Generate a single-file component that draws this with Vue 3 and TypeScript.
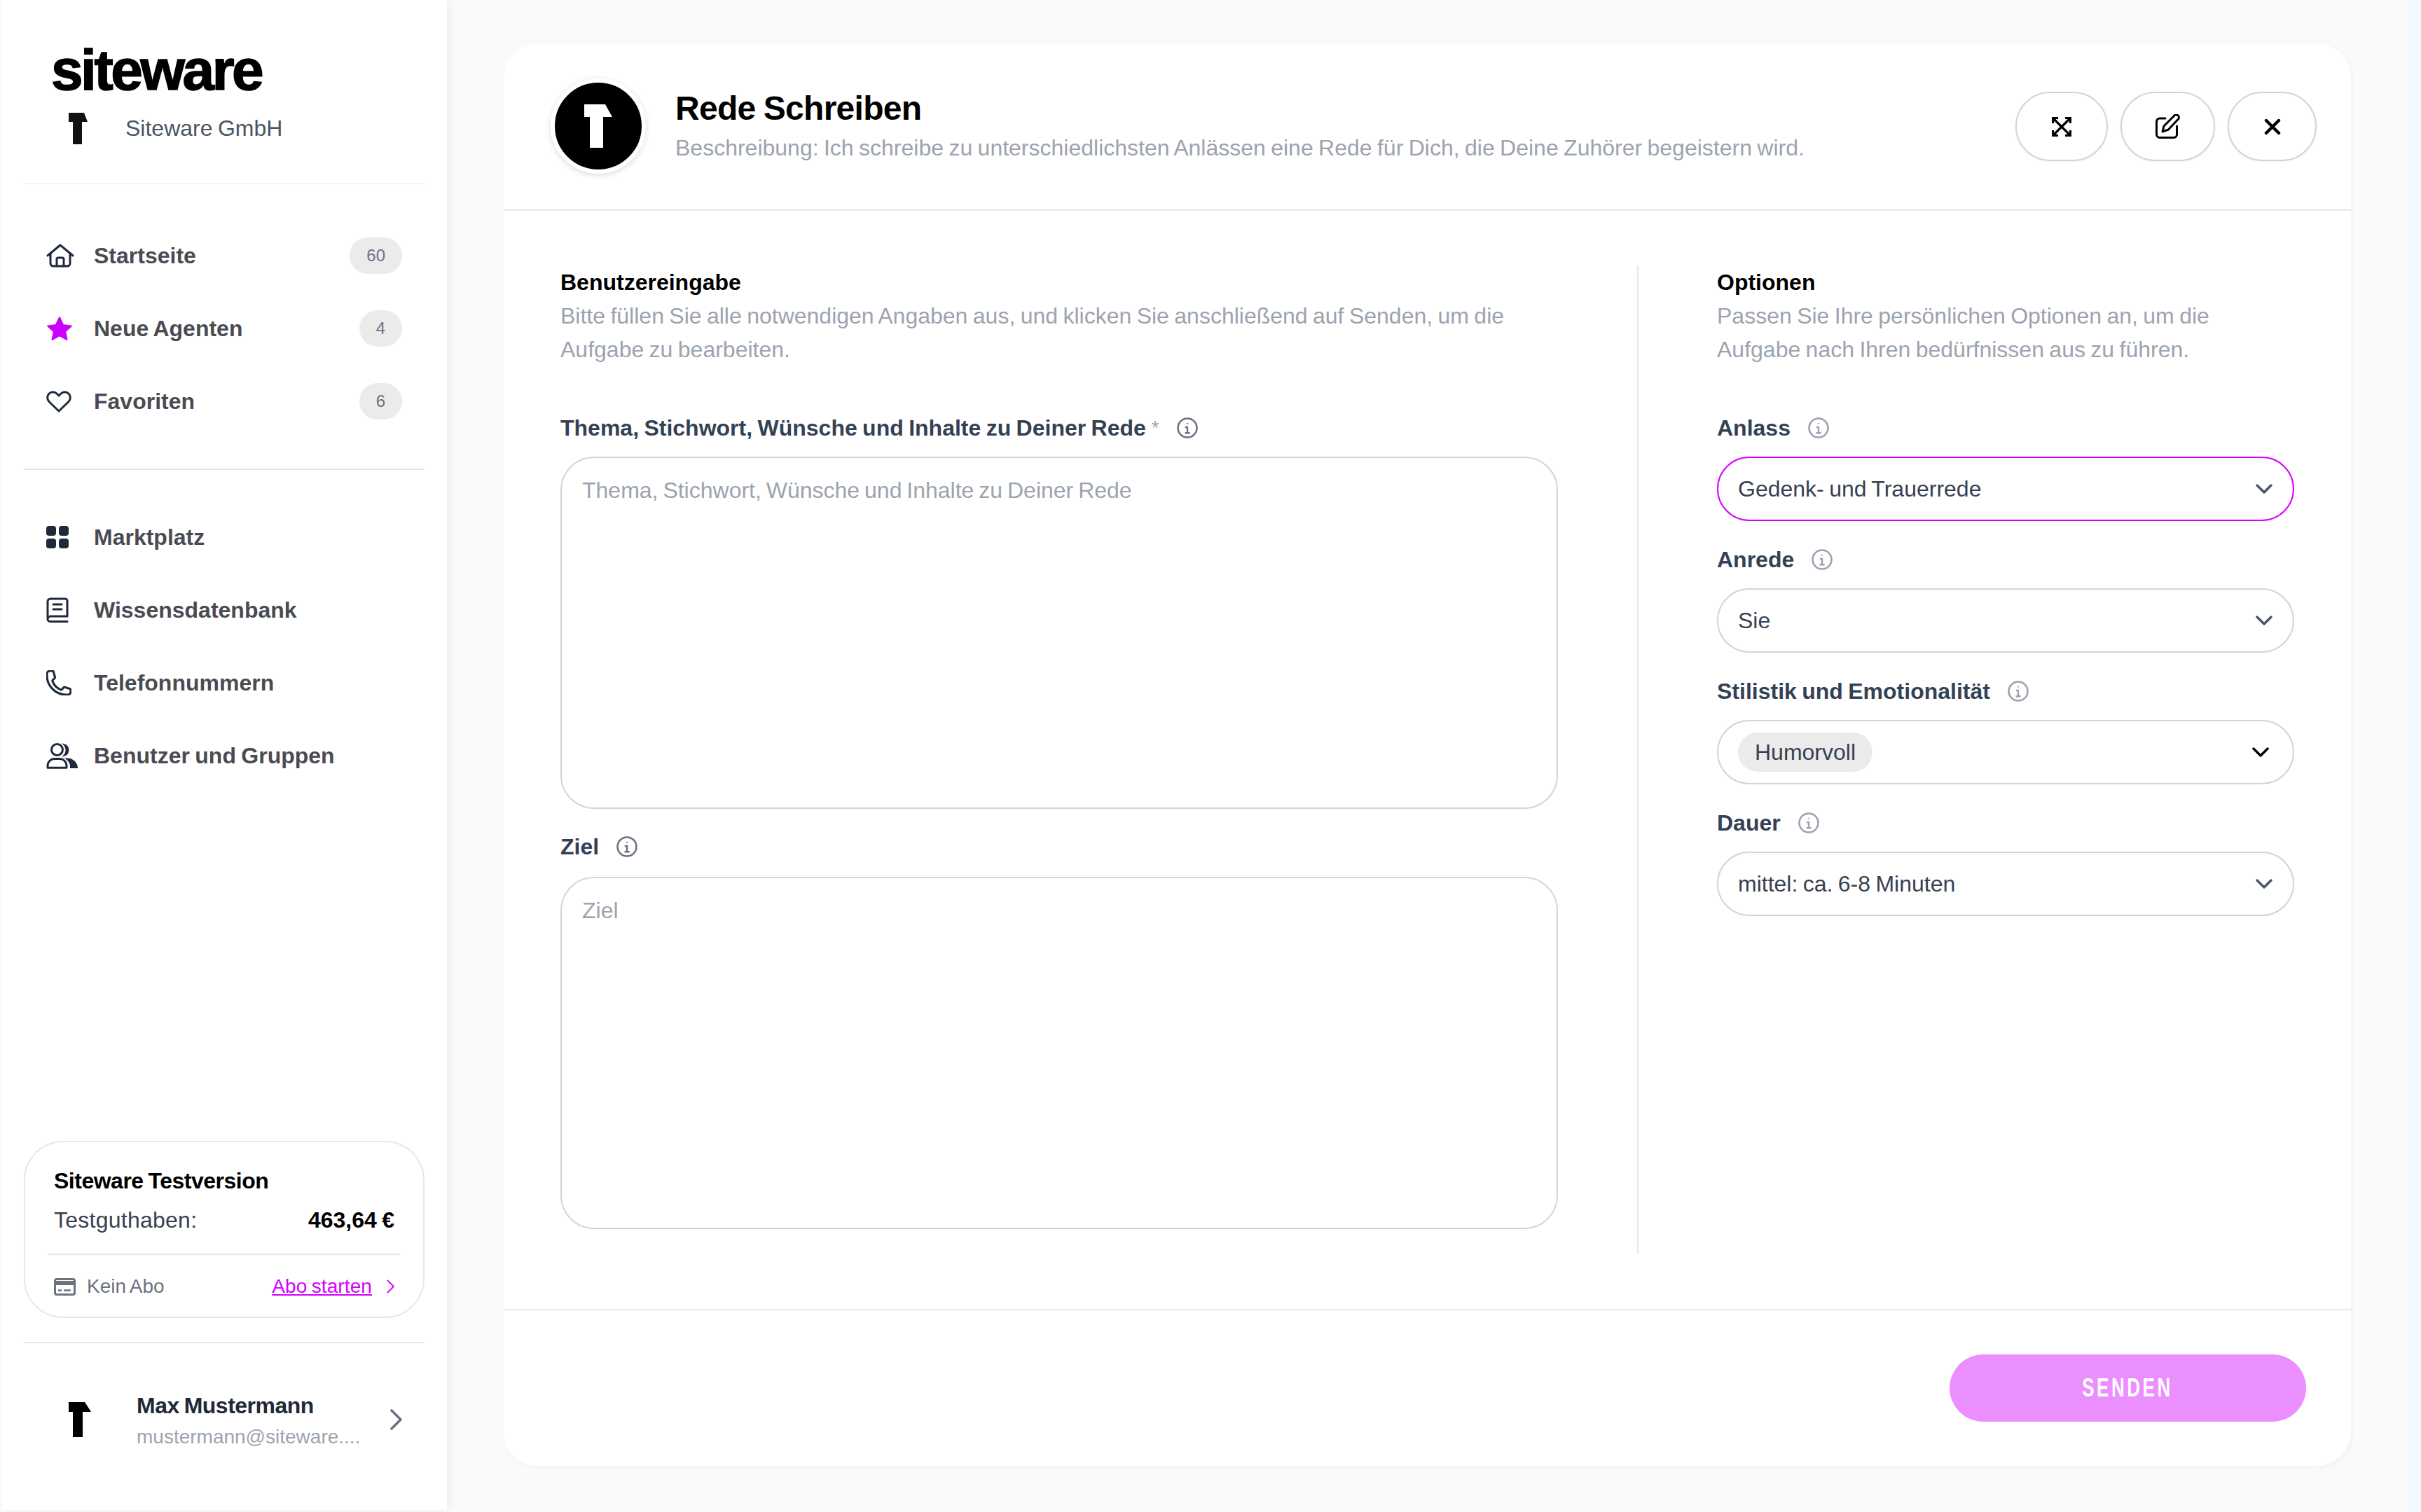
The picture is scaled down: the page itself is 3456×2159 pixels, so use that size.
<script setup lang="ts">
interface Field { label: string; value: string; focus?: boolean; chip?: boolean }
const fields: Field[] = [
  { label: 'Anlass', value: 'Gedenk- und Trauerrede', focus: true },
  { label: 'Anrede', value: 'Sie' },
  { label: 'Stilistik und Emotionalität', value: 'Humorvoll', chip: true },
  { label: 'Dauer', value: 'mittel: ca. 6-8 Minuten' },
]
</script>

<template>
  <svg class="defs" aria-hidden="true">
    <symbol id="info" viewBox="0 0 32 32">
      <circle cx="16" cy="16" r="13.5" fill="none" stroke="currentColor" stroke-width="2.6" />
      <path d="M16 9v1.6M12.8 15H16v8.2M12.6 23.2h7" fill="none" stroke="currentColor" stroke-width="2.4" />
    </symbol>
    <symbol id="chev" viewBox="0 0 24 14">
      <path d="M2 2l10 10L22 2" fill="none" stroke="currentColor" stroke-width="3.4" stroke-linecap="round" stroke-linejoin="round" />
    </symbol>
  </svg>
  <div class="page">
    <aside class="sidebar">
      <div class="brand">
        <div class="logo">siteware</div>
        <div class="org">
          <svg class="org-mark" viewBox="0 0 27 45"><path d="M0 0H22L27 13H19V45H6V13H0Z" fill="#111" /></svg>
          <span>Siteware GmbH</span>
        </div>
      </div>
      <nav class="nav first">
        <a class="row">
          <svg class="ic" viewBox="0 0 40 34" width="40" height="34"><g fill="none" stroke="#1e293b" stroke-width="3" stroke-linecap="round" stroke-linejoin="round"><path d="M2 17L20 2l18 15" /><path d="M6 13.5V28a4 4 0 0 0 4 4h20a4 4 0 0 0 4-4V13.5" /><path d="M15 32V22a2 2 0 0 1 2-2h6a2 2 0 0 1 2 2v10" /></g></svg>
          <span class="name">Startseite</span><span class="badge">60</span>
        </a>
        <a class="row">
          <svg class="ic" viewBox="0 0 38 36" width="38" height="36"><path d="M19 2.5l5 10.8 11.5 1.3-8.6 7.8 2.4 11.4L19 28l-10.300 5.800 2.400-11.400-8.600-7.800 11.500-1.300z" fill="#cc00ff" stroke="#cc00ff" stroke-width="2.4" stroke-linejoin="round" /></svg>
          <span class="name">Neue Agenten</span><span class="badge">4</span>
        </a>
        <a class="row">
          <svg class="ic" viewBox="0 0 36 31" width="36" height="31"><path d="M18 29L4 15.500a8.300 8.300 0 0 1 0-11.500c3.200-3 8-3 11 0l3 3 3-3c3-3 7.800-3 11 0a8.300 8.300 0 0 1 0 11.500z" fill="none" stroke="#1e293b" stroke-width="3" stroke-linejoin="round" /></svg>
          <span class="name">Favoriten</span><span class="badge">6</span>
        </a>
      </nav>
      <nav class="nav">
        <a class="row">
          <svg class="ic" viewBox="0 0 32 32" width="32" height="32"><g fill="#1e293b"><rect width="14" height="14" rx="4" /><rect x="18" width="14" height="14" rx="4" /><rect y="18" width="14" height="14" rx="4" /><rect x="18" y="18" width="14" height="14" rx="4" /></g></svg>
          <span class="name">Marktplatz</span>
        </a>
        <a class="row">
          <svg class="ic" viewBox="0 0 32 36" width="32" height="36"><g fill="none" stroke="#1e293b" stroke-width="3" stroke-linecap="round" stroke-linejoin="round"><path d="M2 30V6a4 4 0 0 1 4-4h21a3 3 0 0 1 3 3v22H6a4 4 0 0 0-4 4 3.500 3.500 0 0 0 3.500 3.500H30" /><path d="M10 10h12M10 17h12" /></g></svg>
          <span class="name">Wissensdatenbank</span>
        </a>
        <a class="row">
          <svg class="ic" viewBox="2 2 20 20" width="36" height="36"><path d="M2.600 6.500c0 8 6.900 14.900 14.900 14.900h1.700a2.200 2.200 0 0 0 2.200-2.200v-1.400c0-.5-.3-.9-.8-1.100l-3.800-1.200c-.5-.1-.9 0-1.200.4l-.9 1.200c-.3.400-.8.500-1.200.400a12 12 0 0 1-6.500-6.700c-.2-.4 0-.9.300-1.200l1.200-1c.4-.3.500-.7.400-1.200L7.800 3.400a1.100 1.100 0 0 0-1-.9H5a2.400 2.400 0 0 0-2.400 2.400z" fill="none" stroke="#1e293b" stroke-width="1.700" stroke-linejoin="round" /></svg>
          <span class="name">Telefonnummern</span>
        </a>
        <a class="row">
          <svg class="ic" viewBox="0 0 46 37" width="46" height="37"><g fill="#1e293b"><path d="M25.500 2.300a8 8 0 0 1 0 15.400 11 11 0 0 0 0-15.400z" stroke="#1e293b" stroke-width="2" /><path d="M25.500 21.500h4.500A15 15 0 0 1 45 35v1H34v-3c0-4.500-3.500-9-8.500-11.500z" /></g><g fill="none" stroke="#1e293b" stroke-width="3" stroke-linejoin="round"><circle cx="15.500" cy="9.500" r="8" /><path d="M2 35.300V32a10 10 0 0 1 10-9.500h7A10 10 0 0 1 29 32v3.300z" /></g></svg>
          <span class="name">Benutzer und Gruppen</span>
        </a>
      </nav>
      <div class="spacer"></div>
      <section class="plan">
        <div class="plan-title">Siteware Testversion</div>
        <div class="plan-credit"><span>Testguthaben:</span><b>463,64 €</b></div>
        <div class="plan-foot">
          <svg viewBox="0 0 31 25" width="31" height="25"><rect x="1.500" y="1.500" width="28" height="22" rx="2.500" fill="none" stroke="#6b7280" stroke-width="3" /><path d="M2 4h27v6H2z" fill="#6b7280" /><path d="M6 17.500h5M14 17.500h10" stroke="#6b7280" stroke-width="2.500" /></svg>
          <span class="no-plan">Kein Abo</span>
          <a class="start">Abo starten</a>
          <svg class="start-chev" viewBox="0 0 11 20" width="11" height="20"><path d="M1 1l9 9-9 9" fill="none" stroke="#cc00ff" stroke-width="1.800" /></svg>
        </div>
      </section>
      <footer class="user">
        <svg class="user-mark" viewBox="0 0 32 50"><path d="M0 0H23L32 14H20V50H6V14H0Z" fill="#000" /></svg>
        <div class="user-text">
          <div class="user-name">Max Mustermann</div>
          <div class="user-mail">mustermann@siteware....</div>
        </div>
        <svg viewBox="0 0 17 30" width="17" height="30"><path d="M2 2l13 13L2 28" fill="none" stroke="#6b7280" stroke-width="3.600" stroke-linecap="round" stroke-linejoin="round" /></svg>
      </footer>
    </aside>

    <main class="main">
      <article class="card">
        <header class="head">
          <div class="avatar">
            <svg viewBox="0 0 40 62" width="40" height="62"><path d="M0 0H30L40 18H27V62H8V18H0Z" fill="#fff" /></svg>
          </div>
          <div class="head-text">
            <h1>Rede Schreiben</h1>
            <p>Beschreibung: Ich schreibe zu unterschiedlichsten Anlässen eine Rede für Dich, die Deine Zuhörer begeistern wird.</p>
          </div>
          <div class="actions">
            <button class="act w1"><svg viewBox="0 0 28 28" width="28" height="28"><path d="M1.500 1.500l25 25M26.500 1.500l-25 25M1.500 9V1.500H9M19 1.500h7.500V9M1.500 19v7.500H9M26.500 19v7.500H19" fill="none" stroke="#000" stroke-width="3.200" /></svg></button>
            <button class="act w2"><svg viewBox="0 0 36 35" width="36" height="35"><g fill="none" stroke="#000" stroke-width="3" stroke-linecap="round" stroke-linejoin="round"><path d="M14 6H6a4.500 4.500 0 0 0-4.500 4.500V29A4.500 4.500 0 0 0 6 33.500h20a4.500 4.500 0 0 0 4.500-4.500V17" /><path d="M10 25l2-8L26 3a3.600 3.600 0 0 1 7 3.500L18.500 22z" /></g></svg></button>
            <button class="act w3"><svg viewBox="0 0 24 24" width="24" height="24"><path d="M3 3l18 18M21 3L3 21" fill="none" stroke="#000" stroke-width="4.400" stroke-linecap="round" /></svg></button>
          </div>
        </header>

        <div class="body">
          <section class="col-left">
            <h2>Benutzereingabe</h2>
            <p class="desc">Bitte füllen Sie alle notwendigen Angaben aus, und klicken Sie anschließend auf Senden, um die Aufgabe zu bearbeiten.</p>
            <label class="lab first-lab">Thema, Stichwort, Wünsche und Inhalte zu Deiner Rede<i>*</i><svg class="inf dark"><use href="#info" /></svg></label>
            <textarea class="ta" placeholder="Thema, Stichwort, Wünsche und Inhalte zu Deiner Rede"></textarea>
            <label class="lab second-lab">Ziel<svg class="inf dark"><use href="#info" /></svg></label>
            <textarea class="ta" placeholder="Ziel"></textarea>
          </section>
          <section class="col-right">
            <h2>Optionen</h2>
            <p class="desc">Passen Sie Ihre persönlichen Optionen an, um die Aufgabe nach Ihren bedürfnissen aus zu führen.</p>
            <div class="fields">
              <div v-for="f in fields" :key="f.label" class="field">
                <label class="lab">{{ f.label }}<svg class="inf"><use href="#info" /></svg></label>
                <div class="select" :class="{ focus: f.focus }">
                  <span :class="{ chip: f.chip }">{{ f.value }}</span>
                  <svg class="chev" :class="{ black: f.chip }"><use href="#chev" /></svg>
                </div>
              </div>
            </div>
          </section>
        </div>

        <footer class="foot"><button class="send"><span>SENDEN</span></button></footer>
      </article>
    </main>
    <div class="rail"></div>
  </div>
</template>

<style scoped>
.defs { display: none; }
.page {
  display: flex;
  height: 2159px;
  box-sizing: border-box;
  padding: 0 0 3px 2px;
  background: #fafafa;
  font-family: "Liberation Sans", Arial, sans-serif;
  font-size: 32px;
  word-spacing: -1.5px;
  overflow: hidden;
}
.sidebar {
  width: 636px;
  flex: none;
  display: flex;
  flex-direction: column;
  background: #fff;
  box-shadow: 4px 0 12px rgba(0, 0, 0, 0.05);
}
.brand {
  height: 263px;
  margin: 0 32px;
  box-sizing: border-box;
  padding: 52px 0 0 39px;
  border-bottom: 2px solid #f3f4f6;
}
.logo {
  font-size: 82px;
  line-height: 96px;
  height: 88px;
  font-weight: 700;
  letter-spacing: -3.5px;
  -webkit-text-stroke: 1.5px #000;
  color: #000;
}
.org { display: flex; align-items: center; margin-top: 21px; padding-left: 25px; color: #4b5563; }
.org-mark { width: 27px; height: 45px; margin-right: 54px; }
.nav { padding: 44px 32px; }
.nav.first { border-bottom: 2px solid #e5e7eb; margin: 0 32px; padding: 50px 0 44px; }
.row { position: relative; display: flex; align-items: center; height: 104px; padding: 0 32px; color: #4a4b52; }
.ic { flex: none; }
.name { position: absolute; left: 100px; font-weight: 700; }
.badge {
  margin-left: auto;
  height: 52px;
  padding: 0 24px;
  box-sizing: border-box;
  border-radius: 26px;
  background: #ebebeb;
  color: #6b7280;
  font-size: 24px;
  line-height: 52px;
  text-align: center;
}
.spacer { flex: 1; }
.plan {
  margin: 0 32px 34px;
  height: 253px;
  box-sizing: border-box;
  border: 2px solid #e5e7eb;
  border-radius: 56px;
  padding: 31px 41px 0;
}
.plan-title { font-weight: 700; line-height: 48px; color: #000; letter-spacing: -0.5px; }
.plan-credit { display: flex; justify-content: space-between; align-items: center; line-height: 48px; margin-top: 8px; color: #374151; }
.plan-credit span { letter-spacing: 0.25px; }
.plan-credit b { color: #000; }
.plan-foot {
  display: flex;
  align-items: center;
  margin: 24px -9px 0;
  padding: 17px 9px 0;
  border-top: 2px solid #e5e7eb;
  font-size: 28px;
  height: 56px;
}
.no-plan { margin-left: 16px; color: #6b7280; }
.start { margin-left: auto; color: #d400ff; text-decoration: underline; letter-spacing: 0.1px; }
.start-chev { margin-left: 21px; }
.user {
  margin: 0 32px;
  height: 240px;
  box-sizing: border-box;
  border-top: 2px solid #e5e7eb;
  display: flex;
  align-items: center;
  padding: 0 0 20px 64px;
}
.user-mark { width: 32px; height: 50px; margin-right: 65px; flex: none; }
.user-text { flex: 1; margin-top: 4px; }
.user-name { font-weight: 700; color: #1f2937; line-height: 44px; letter-spacing: -0.5px; }
.user-mail { font-size: 28px; color: #9ca3af; line-height: 44px; margin-top: 1px; }
.user > svg:last-child { margin-right: 32px; }
.main {
  flex: 1;
  min-width: 0;
  padding: 62px 80px 63px 81px;
}
.card {
  height: 100%;
  display: flex;
  flex-direction: column;
  background: #fff;
  border-radius: 48px;
  box-shadow: 2px 2px 6px rgba(0, 0, 0, 0.04);
}
.head {
  flex: none;
  height: 239px;
  box-sizing: border-box;
  display: flex;
  align-items: center;
  padding: 0 49px 0 67px;
  border-bottom: 2px solid #e5e7eb;
}
.avatar {
  width: 124px;
  height: 124px;
  flex: none;
  box-sizing: content-box;
  border: 6px solid #fff;
  border-radius: 50%;
  background: #000;
  box-shadow: 0 2px 8px rgba(0, 0, 0, 0.14);
  display: flex;
  align-items: center;
  justify-content: center;
  margin-top: -2px;
}
.head-text { flex: 1; margin-left: 42px; margin-top: -3px; }
h1 { margin: 0; font-size: 48px; line-height: 64px; font-weight: 700; color: #000; letter-spacing: -0.7px; }
.head-text p { margin: 0; color: #9ca3af; line-height: 48px; }
.actions { display: flex; gap: 18px; }
.act {
  height: 99px;
  padding: 0;
  background: #fff;
  border: 2px solid #d1d5db;
  border-radius: 50px;
  box-shadow: 0 1px 3px rgba(0, 0, 0, 0.06);
  display: flex;
  align-items: center;
  justify-content: center;
}
.w1 { width: 132px; }
.w2 { width: 135px; }
.w3 { width: 127px; }
.body {
  flex: 1;
  display: flex;
  padding: 78px 81px 78px;
  min-height: 0;
}
.col-left { width: 1424px; flex: none; margin-right: 113px; display: flex; flex-direction: column; }
.col-right { flex: 1; border-left: 2px solid #e5e7eb; padding-left: 112px; }
h2 { margin: 0; font-size: 32px; line-height: 48px; font-weight: 700; color: #000; }
.desc { margin: 0; line-height: 48px; color: #9ca3af; }
.lab { display: flex; align-items: center; font-weight: 700; line-height: 48px; color: #334155; }
.lab i { font-style: normal; font-weight: 400; color: #9ca3af; font-size: 28px; margin-left: 8px; }
.first-lab { margin-top: 64px; margin-bottom: 17px; }
.second-lab { margin-top: 30px; margin-bottom: 19px; }
.inf { width: 32px; height: 32px; margin-left: 24px; color: #9ca3af; flex: none; }
.inf.dark { color: #6b7280; }
.ta {
  display: block;
  height: 503px;
  box-sizing: border-box;
  width: 100%;
  padding: 24px 29px;
  border: 2px solid #d1d5db;
  border-radius: 48px;
  resize: none;
  background: #fff;
  font: inherit;
  word-spacing: -2px;
  line-height: 44px;
  outline: none;
}
.ta::placeholder { color: #9ca3af; opacity: 1; }
.fields { margin-top: 64px; }
.field { margin-bottom: 31px; }
.field .lab { margin-bottom: 17px; }
.select {
  height: 92px;
  box-sizing: border-box;
  display: flex;
  align-items: center;
  justify-content: space-between;
  padding: 0 28px;
  border: 2px solid #d1d5db;
  border-radius: 46px;
  color: #374151;
}
.select.focus { border-color: #d900ff; }
.chip { background: #ebebeb; border-radius: 28px; height: 56px; line-height: 56px; padding: 0 24px; }
.chev { width: 24px; height: 14px; color: #4b5563; margin-right: 1px; }
.chev.black { color: #000; margin-right: 6px; }
.foot {
  flex: none;
  height: 224px;
  box-sizing: border-box;
  border-top: 2px solid #e5e7eb;
  display: flex;
  justify-content: flex-end;
  padding: 63px 64px 0 0;
}
.send {
  width: 509px;
  height: 96px;
  border: 0;
  border-radius: 48px;
  background: #eb8fff;
  color: #fff;
  font-family: "Liberation Sans", sans-serif;
  font-size: 36px;
  font-weight: 700;
  letter-spacing: 5px;
}
.send span { display: inline-block; transform: scaleX(0.72); }
.rail { width: 20px; flex: none; background: #f3f8fd; margin-bottom: -3px; }
</style>

<style>
html, body { margin: 0; background: #fafafa; }
</style>
